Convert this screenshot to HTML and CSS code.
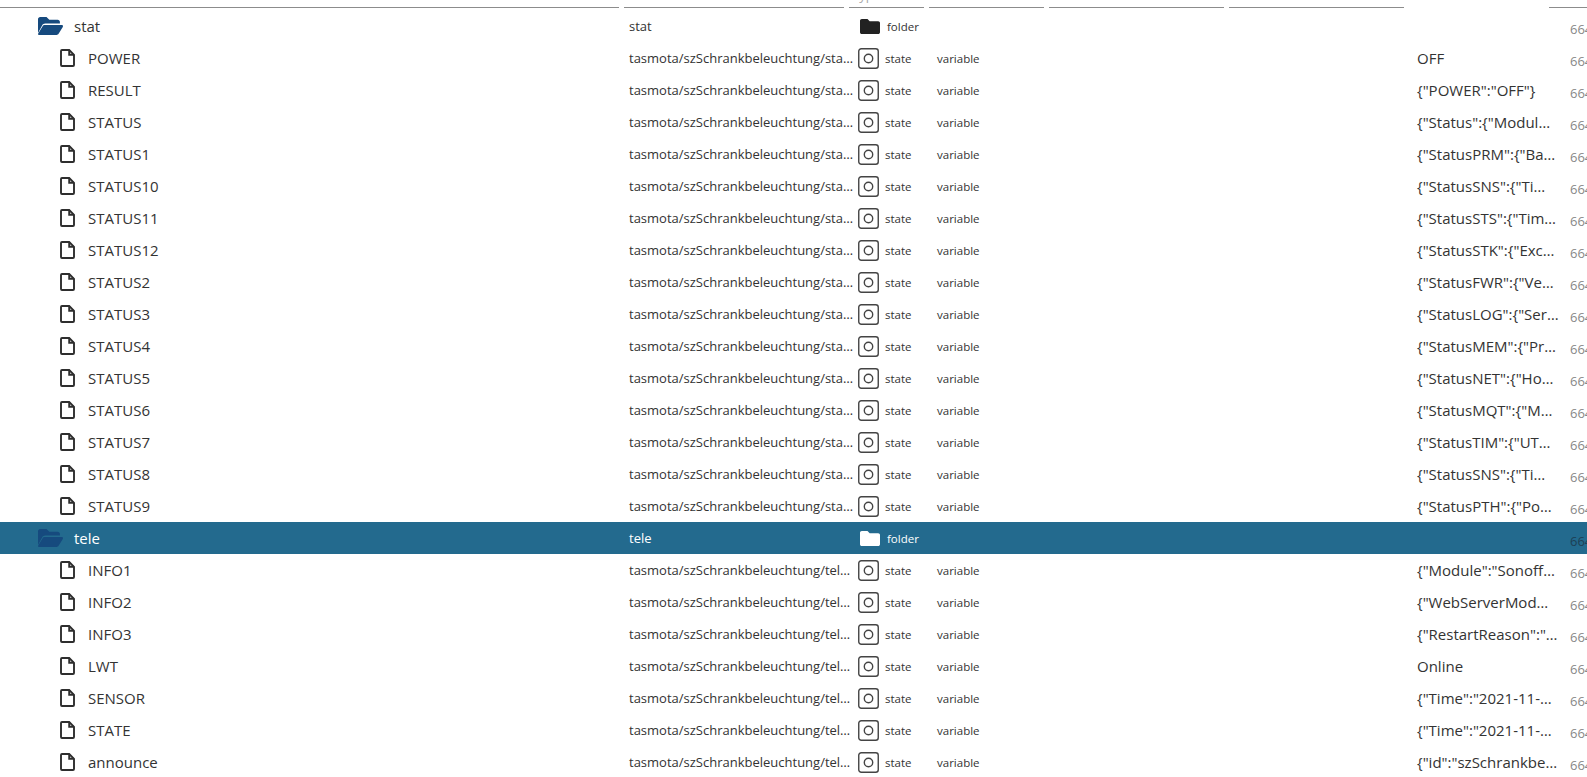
FILE: index.html
```html
<!DOCTYPE html>
<html lang="en">
<head>
    <meta charset="UTF-8">
    <meta name="viewport" content="width=device-width, initial-scale=1.0">
    <title>Objects</title>
    <link rel="stylesheet" href="styles.css">
</head>
<body>
    <svg class="sprites" width="0" height="0">
        <symbol id="folder-open" viewBox="0 0 25 18">
            <path d="M0 16V2.2C0 1 1 0 2.2 0h6.3l2.8 2.8h8.4c1.2 0 2.2 1 2.2 2.2v1.6H7.2c-1.3 0-2.5.7-3.1 1.9L0 16z"/>
            <path d="M1.2 18c-.9 0-1.4-.9-1-1.6L4.6 9.3c.4-.7 1.2-1.2 2-1.2h17.2c.9 0 1.5 1 1 1.8l-4.2 6.9c-.4.7-1.2 1.2-2 1.2H1.2z"/>
        </symbol>
        <symbol id="file" viewBox="0 0 15 18">
            <path d="M2 1h7.200l4.800 4.800v10.200c0 .6-.4 1-1 1H2c-.6 0-1-.4-1-1V2c0-.6.4-1 1-1z" fill="none" stroke="currentColor" stroke-width="1.900"/>
            <path d="M9.200 1v4.800H14" fill="none" stroke="currentColor" stroke-width="1.900"/>
        </symbol>
        <symbol id="folder" viewBox="0 0 20 15">
            <path d="M1.800 0h5.700l2.200 2.200h8.500c1 0 1.800.8 1.800 1.800v9.200c0 1-.8 1.800-1.800 1.800H1.800C.8 15 0 14.200 0 13.200V1.800C0 .8.8 0 1.800 0z"/>
        </symbol>
        <symbol id="state" viewBox="0 0 21 21">
            <rect x=".75" y=".75" width="19.500" height="19.500" rx="2.500" fill="none" stroke="currentColor" stroke-width="1.400"/>
            <circle cx="10.500" cy="10.500" r="4.200" fill="none" stroke="currentColor" stroke-width="1.400"/>
        </symbol>
    </svg>

    <div class="head">
        <div class="head-cell"></div>
        <div class="head-cell"></div>
        <div class="head-cell"><span class="head-text">Type</span></div>
        <div class="head-cell"></div>
        <div class="head-cell"></div>
        <div class="head-cell"></div>
        <div class="head-cell head-blank"></div>
        <div class="head-cell"></div>
    </div>
    <div id="tree"></div>

    <script>
        const base = 'tasmota/szSchrankbeleuchtung/';
        const rows = [
            ['stat', 'folder'],
            ['POWER', 'sta', 'OFF'],
            ['RESULT', 'sta', '{"POWER":"OFF"}'],
            ['STATUS', 'sta', '{"Status":{"Modul…'],
            ['STATUS1', 'sta', '{"StatusPRM":{"Ba…'],
            ['STATUS10', 'sta', '{"StatusSNS":{"Ti…'],
            ['STATUS11', 'sta', '{"StatusSTS":{"Tim…'],
            ['STATUS12', 'sta', '{"StatusSTK":{"Exc…'],
            ['STATUS2', 'sta', '{"StatusFWR":{"Ve…'],
            ['STATUS3', 'sta', '{"StatusLOG":{"Ser…'],
            ['STATUS4', 'sta', '{"StatusMEM":{"Pr…'],
            ['STATUS5', 'sta', '{"StatusNET":{"Ho…'],
            ['STATUS6', 'sta', '{"StatusMQT":{"M…'],
            ['STATUS7', 'sta', '{"StatusTIM":{"UT…'],
            ['STATUS8', 'sta', '{"StatusSNS":{"Ti…'],
            ['STATUS9', 'sta', '{"StatusPTH":{"Po…'],
            ['tele', 'folder'],
            ['INFO1', 'tel', '{"Module":"Sonoff…'],
            ['INFO2', 'tel', '{"WebServerMod…'],
            ['INFO3', 'tel', '{"RestartReason":"…'],
            ['LWT', 'tel', 'Online'],
            ['SENSOR', 'tel', '{"Time":"2021-11-…'],
            ['STATE', 'tel', '{"Time":"2021-11-…'],
            ['announce', 'tel', '{"id":"szSchrankbe…']
        ];

        function icon(name, cls) {
            return `<svg class="${cls}"><use href="#${name}"></use></svg>`;
        }

        function folderRow(row) {
            const selected = row[0] === 'tele' ? ' selected' : '';
            return `
                <div class="row${selected}">
                    <div class="cell name folder-name">${icon('folder-open', 'ico-open')}<span>${row[0]}</span></div>
                    <div class="cell path">${row[0]}</div>
                    <div class="cell type folder-type">${icon('folder', 'ico-folder')}<span>folder</span></div>
                    <div class="cell"></div>
                    <div class="cell"></div>
                    <div class="cell"></div>
                    <div class="cell"></div>
                    <div class="cell num">664</div>
                </div>
            `;
        }

        function stateRow(row) {
            return `
                <div class="row">
                    <div class="cell name state-name">${icon('file', 'ico-file')}<span>${row[0]}</span></div>
                    <div class="cell path">${base}${row[1]}…</div>
                    <div class="cell type">${icon('state', 'ico-state')}<span>state</span></div>
                    <div class="cell role">variable</div>
                    <div class="cell"></div>
                    <div class="cell"></div>
                    <div class="cell value">${row[2].replace(/"/g, '&quot;')}</div>
                    <div class="cell num">664</div>
                </div>
            `;
        }

        document.getElementById('tree').innerHTML = rows.map(row => {
            return row[1] === 'folder' ? folderRow(row) : stateRow(row);
        }).join('');
    </script>
</body>
</html>
```
FILE: styles.css
```css
html, body {
    margin: 0;
    height: 100%;
    overflow: hidden;
}
body {
    font-family: "Open Sans", "Noto Sans", sans-serif;
    font-size: 13px;
    color: #333;
    background: #fff;
}
.sprites {
    display: block;
    height: 0;
}
.head, .row {
    display: grid;
    grid-template-columns: 619px 220px 75px 115px 175px 175px 135px 60px;
    column-gap: 5px;
}
.head {
    height: 10px;
}
.head-cell {
    height: 7px;
    border-bottom: 1px solid #8c8c8c;
    overflow: hidden;
    position: relative;
}
.head-blank {
    border-bottom: none;
}
.head-text {
    position: absolute;
    left: 3px;
    bottom: 4px;
    font-size: 13px;
    line-height: 16px;
    color: #aaa;
}
.row {
    height: 32px;
    align-items: center;
}
.cell {
    display: flex;
    align-items: center;
    min-width: 0;
    white-space: nowrap;
}
.folder-name {
    padding-left: 38px;
    font-size: 15px;
}
.state-name {
    padding-left: 60px;
    font-size: 15px;
}
.ico-open {
    width: 25px;
    height: 18px;
    margin-right: 11px;
    fill: #164a7e;
}
.ico-file {
    width: 15px;
    height: 18px;
    margin-right: 13px;
    color: #2e2e2e;
}
.path {
    padding-left: 5px;
}
.type {
    font-size: 11.5px;
    padding-left: 9px;
}
.ico-state {
    width: 21px;
    height: 21px;
    margin-right: 6px;
    color: #444;
}
.folder-type {
    padding-left: 11px;
}
.ico-folder {
    width: 20px;
    height: 15px;
    margin-right: 7px;
    fill: #222;
}
.role {
    font-size: 11.5px;
    padding-left: 8px;
    padding-top: 1px;
}
.value {
    padding-left: 8px;
    font-size: 15px;
}
.num {
    padding-left: 21px;
    padding-top: 5px;
    font-size: 13px;
    color: #888;
}
.selected {
    background: #236a8e;
    color: #fff;
}
.selected .ico-folder {
    fill: #fff;
}
.selected .num {
    color: #1d3f55;
}
```
